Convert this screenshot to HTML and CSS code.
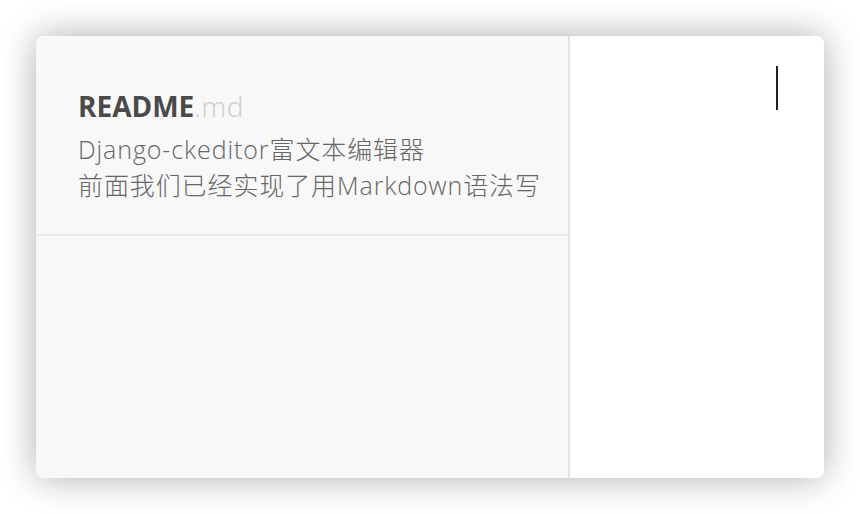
FILE: index.html
```html
<!DOCTYPE html>
<html>
<head>
<meta charset="utf-8">
<link rel="stylesheet" href="styles.css">
</head>
<body>
<div class="card">
  <div class="list">
    <div class="item">
      <div class="title"><span class="name">README</span><span class="ext">.md</span></div>
      <div class="excerpt">Django-ckeditor富文本编辑器<br>前面我们已经实现了用Markdown语法写</div>
    </div>
  </div>
  <div class="editor">
    <div class="cursor"></div>
  </div>
</div>
</body>
</html>
```
FILE: styles.css
```css
html, body {
  margin: 0;
  padding: 0;
  background: #ffffff;
}
body {
  width: 860px;
  height: 514px;
  overflow: hidden;
}
.card {
  margin: 36px 0 0 36px;
  width: 788px;
  height: 442px;
  border-radius: 8px;
  overflow: hidden;
  display: flex;
  box-shadow: 0 0 36px rgba(0, 0, 0, 0.32);
  background: #fff;
}
.list {
  width: 532px;
  background: #f8f8f8;
  border-right: 2px solid #e2e2e2;
}
.item {
  height: 200px;
  border-bottom: 2px solid #ececec;
  padding: 51px 0 0 42px;
  box-sizing: border-box;
}
.title {
  font-family: "Open Sans", sans-serif;
  font-size: 28px;
  line-height: 38px;
}
.name {
  font-weight: 700;
  color: #4a4a4a;
}
.ext {
  font-weight: 300;
  color: #cccccc;
  letter-spacing: 0.5px;
}
.excerpt {
  margin-top: 6px;
  font-family: "Open Sans", "Noto Sans CJK SC", sans-serif;
  font-size: 25px;
  letter-spacing: 0.9px;
  line-height: 36px;
  color: #666666;
  font-weight: 300;
}
.editor {
  flex: 1;
  background: #fff;
}
.cursor {
  width: 2px;
  height: 44px;
  margin: 30px 0 0 206px;
  background: #222;
}
```
